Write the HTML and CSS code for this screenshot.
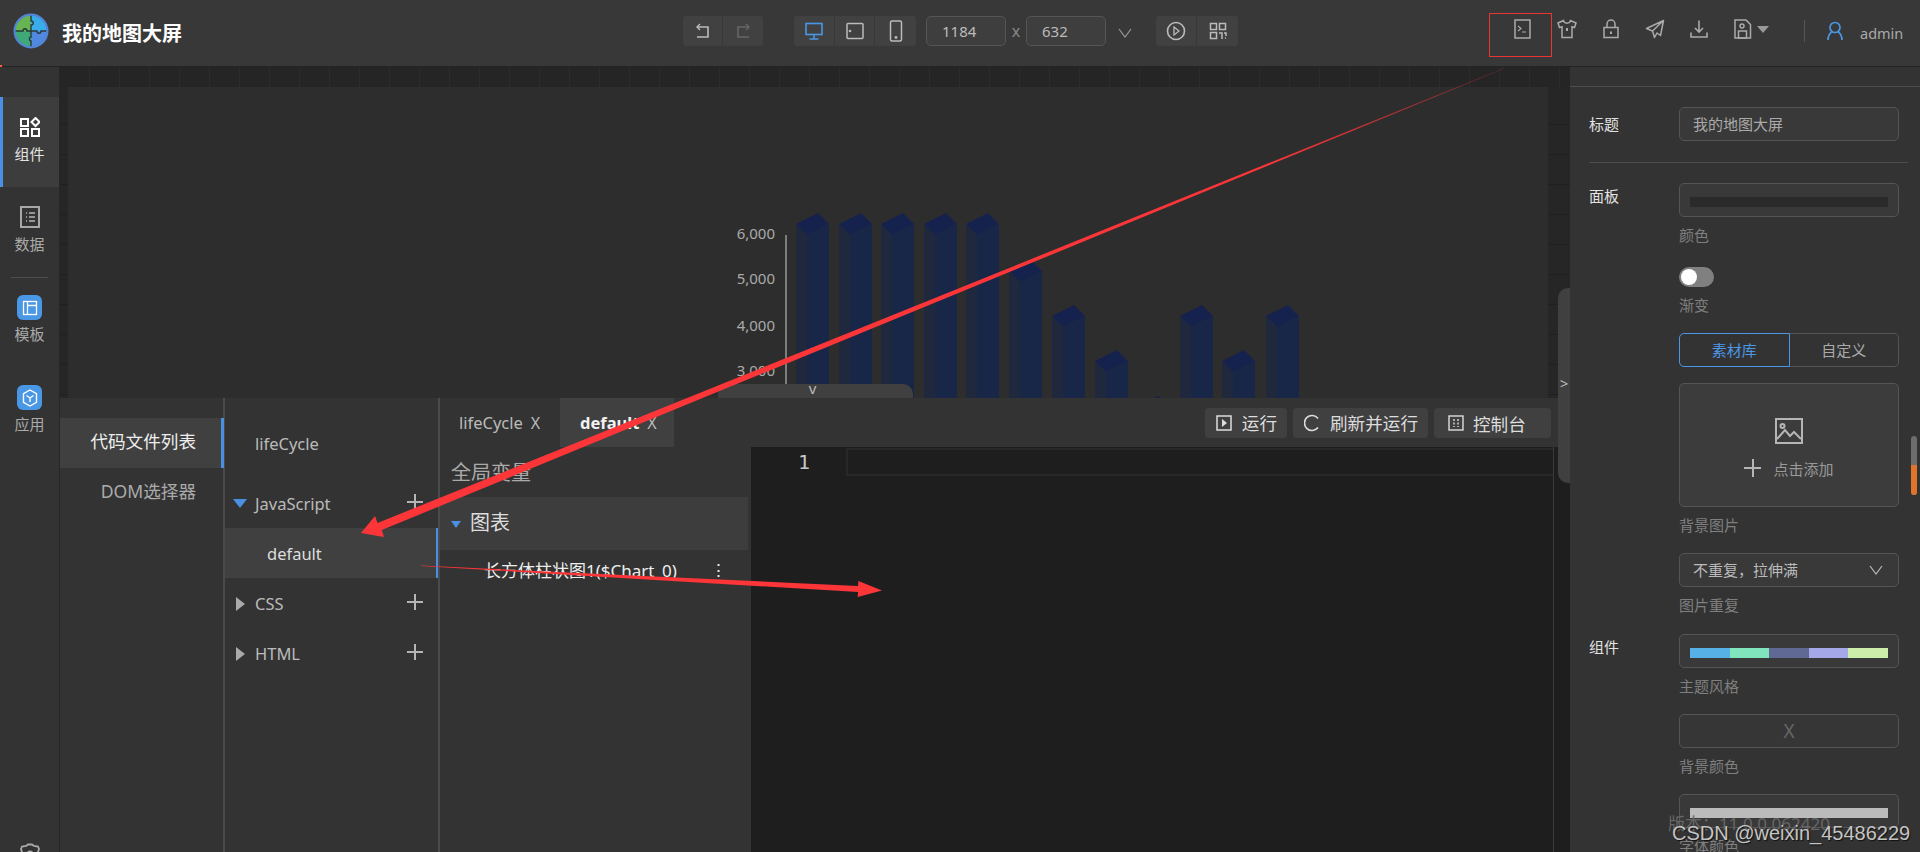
FILE: index.html
```html
<!DOCTYPE html>
<html lang="zh-CN">
<head>
<meta charset="utf-8">
<title>我的地图大屏</title>
<link rel="stylesheet" href="styles.css">
</head>
<body>
<div class="app">
  <header class="topbar">
    <div class="brand">
      <svg class="logo" width="36" height="36" viewBox="0 0 36 36">
        <path d="M18 2A16 16 0 0 0 2 18H18Z" fill="#66b552"/>
        <path d="M18 2A16 16 0 0 1 34 18H18Z" fill="#38ade9"/>
        <path d="M2 18A16 16 0 0 0 18 34V18Z" fill="#3fa878"/>
        <path d="M34 18A16 16 0 0 1 18 34V18Z" fill="#5089e0"/>
        <path d="M2 18H10c0-3 4-3 4 0h4V12c3 0 3-4 0-4V2M18 18v6c-2 0-2 4 0 4v6M18 18h6c0 3 4 3 4 0h6" fill="none" stroke="#2b3a3a" stroke-width="1.4"/>
        <circle cx="18" cy="18" r="16.4" fill="none" stroke="#5285d6" stroke-width="2.2"/>
      </svg>
      <span class="brand-name">我的地图大屏</span>
    </div>
    <div class="btn-group undo">
      <span class="cell"><svg width="18" height="18" viewBox="0 0 18 18" fill="none" stroke="#bbb" stroke-width="1.6"><path d="M3 5h11v10H3"/><path d="M6 2L3 5l3 3" stroke-width="1.4"/></svg></span>
      <span class="cell"><svg width="18" height="18" viewBox="0 0 18 18" fill="none" stroke="#666" stroke-width="1.6"><path d="M15 5H4v10h11"/><path d="M12 2l3 3-3 3" stroke-width="1.4"/></svg></span>
    </div>
    <div class="btn-group device">
      <span class="cell"><svg width="20" height="20" viewBox="0 0 20 20" fill="none" stroke="#4a97e6" stroke-width="1.6"><rect x="2" y="2.500" width="16" height="11"/><path d="M10 14v4M5.500 18h9"/></svg></span>
      <span class="cell"><svg width="20" height="20" viewBox="0 0 20 20" fill="none" stroke="#bbb" stroke-width="1.5"><rect x="2" y="2.500" width="16" height="15" rx="1"/><circle cx="5" cy="10" r=".6" fill="#bbb"/></svg></span>
      <span class="cell"><svg width="20" height="22" viewBox="0 0 20 22" fill="none" stroke="#bbb" stroke-width="1.5"><rect x="4.500" y="1" width="11" height="20" rx="1.500"/><circle cx="10" cy="17.500" r=".7" fill="#bbb"/></svg></span>
    </div>
    <span class="size-input first">1184</span>
    <span class="size-x">x</span>
    <span class="size-input">632</span>
    <svg class="size-chevron" width="14" height="10" viewBox="0 0 14 10" fill="none" stroke="#999" stroke-width="1.200"><path d="M1 1l6 8 6-8"/></svg>
    <div class="btn-group preview">
      <span class="cell"><svg width="20" height="20" viewBox="0 0 20 20" fill="none" stroke="#bbb" stroke-width="1.600"><circle cx="10" cy="10" r="8.500"/><path d="M8 6l5 4-5 4z" stroke-width="1.300"/></svg></span>
      <span class="cell"><svg width="18" height="18" viewBox="0 0 18 18" fill="none" stroke="#bbb" stroke-width="1.500"><rect x="1.500" y="1.500" width="6" height="6"/><rect x="10.500" y="1.500" width="6" height="6"/><rect x="1.500" y="10.500" width="6" height="6"/><path d="M10 11h3v6M15 11h2v3M16 16h1" /></svg></span>
    </div>
    <div class="tools">
      <span class="tool"><svg width="18" height="20" viewBox="0 0 18 20" fill="none" stroke="#aaa" stroke-width="1.500"><rect x="1" y="1" width="15" height="18"/><path d="M4 7l3 2.500-3 2.500M8 13h4" stroke-width="1.200"/></svg></span>
      <span class="tool"><svg width="20" height="20" viewBox="0 0 20 20" fill="none" stroke="#aaa" stroke-width="1.500"><path d="M6.500 1.500L1 4l1.500 4.500 2.500-.7V18.500h10V7.800l2.500.7L19 4l-5.500-2.500c-.5 3.500-6.500 3.500-7 0z"/><path d="M10 9v3" stroke-width="2"/></svg></span>
      <span class="tool"><svg width="18" height="20" viewBox="0 0 18 20" fill="none" stroke="#aaa" stroke-width="1.500"><rect x="2" y="8.500" width="14" height="10"/><path d="M5 8.500V5a4 4 0 0 1 8 0v3.500"/><path d="M9 12.500v2.500" stroke-width="2"/></svg></span>
      <span class="tool"><svg width="20" height="20" viewBox="0 0 20 20" fill="none" stroke="#aaa" stroke-width="1.500" stroke-linejoin="round"><path d="M18.500 1.500L1.500 9.500l6 2.500 2 6.500 2.500-4.500 3.500 2.500zM18.500 1.500L7.500 12"/></svg></span>
      <span class="tool"><svg width="20" height="20" viewBox="0 0 20 20" fill="none" stroke="#aaa" stroke-width="1.600"><path d="M10 1.500v11M6 9l4 4 4-4"/><path d="M2 13.500v4.500h16v-4.500"/></svg></span>
      <span class="tool save"><svg width="18" height="20" viewBox="0 0 18 20" fill="none" stroke="#aaa" stroke-width="1.500"><path d="M1 1h11l4.500 4.500V19H1z"/><circle cx="8" cy="7" r="2"/><rect x="4.500" y="12" width="8" height="7"/></svg><i class="caret"></i></span>
    </div>
    <span class="vsep"></span>
    <svg class="user-ic" width="18" height="20" viewBox="0 0 18 20" fill="none" stroke="#4a97e6" stroke-width="1.700"><circle cx="9" cy="6.500" r="5"/><path d="M2 19c0-5 3-7.500 3.500-8M16 19c0-5-3-7.500-3.500-8"/></svg>
    <span class="user-name">admin</span>
  </header>

  <div class="body">
    <nav class="side">
      <div class="side-item active">
        <svg width="20" height="20" viewBox="0 0 20 20" fill="none" stroke="#fff" stroke-width="2"><rect x="1" y="2" width="7" height="7"/><rect x="1" y="12" width="7" height="7"/><rect x="12" y="12" width="7" height="7"/><path d="M15.500 1l4 4-4 4-4-4z"/></svg>
        <span>组件</span>
      </div>
      <div class="side-item">
        <svg width="20" height="24" viewBox="0 0 20 24" fill="none" stroke="#b5b5b5" stroke-width="1.800"><rect x="1" y="2" width="18" height="20"/><path d="M6 8h1M9 8h6M6 12h1M9 12h6M6 16h1M9 16h6" stroke-width="1.500"/></svg>
        <span>数据</span>
      </div>
      <div class="side-sep"></div>
      <div class="side-item app-item">
        <b class="badge"><svg width="16" height="16" viewBox="0 0 16 16" fill="none" stroke="#fff" stroke-width="1.300"><rect x="1.500" y="1.500" width="13" height="13"/><path d="M5.500 1.500v13M5.500 5.500h9"/></svg></b>
        <span>模板</span>
      </div>
      <div class="side-item app-item">
        <b class="badge"><svg width="16" height="18" viewBox="0 0 16 18" fill="none" stroke="#fff" stroke-width="1.400"><path d="M8 1l6.500 3.700v8.600L8 17l-6.500-3.700V4.700z"/><path d="M4.500 6.500L8 9l3.500-2.500M8 9v4"/></svg></b>
        <span>应用</span>
      </div>
      <svg class="gear" width="24" height="24" viewBox="0 0 24 24" fill="none" stroke="#aaa" stroke-width="1.800"><path d="M8 3l2-1.500h4L16 3l4 .5 1 2.500-1 3 2 3-2 3 1 3-1 2.500-4 .5-2 1.500h-4L8 21l-4-.5L3 18l1-3-2-3 2-3-1-3 1-2.500z"/><circle cx="12" cy="12" r="3.500"/></svg>
    </nav>

    <main class="work">
      <div class="ruler-top"></div>
      <div class="stage">
        <div class="ruler-left"></div>
        <div class="canvas">
          <svg class="chart" width="1480" height="311" viewBox="68 87 1480 311">
            <defs>
              <g id="bar">
                <path d="M0 0L11 11V400H0Z" fill="#20283e"/>
                <path d="M11 11L33 0V400H11Z" fill="#182748"/>
                <path d="M0 0L22-11L33 0L11 11Z" fill="#15224d"/>
              </g>
            </defs>
            <use href="#bar" x="796" y="224"/>
            <use href="#bar" x="839" y="224"/>
            <use href="#bar" x="881" y="224"/>
            <use href="#bar" x="924" y="224"/>
            <use href="#bar" x="966" y="224"/>
            <use href="#bar" x="1009" y="271"/>
            <use href="#bar" x="1052" y="316"/>
            <use href="#bar" x="1095" y="361"/>
            <use href="#bar" x="1136" y="407"/>
            <use href="#bar" x="1180" y="316"/>
            <use href="#bar" x="1222" y="361"/>
            <use href="#bar" x="1266" y="316"/>
            <line x1="786" y1="235" x2="786" y2="398" stroke="#999" stroke-width="1.500"/>
            <g class="axis-labels">
              <text x="775" y="239">6,000</text>
              <text x="775" y="284">5,000</text>
              <text x="775" y="331">4,000</text>
              <text x="775" y="376">3,000</text>
            </g>
          </svg>
          <div class="collapse-tab">v</div>
        </div>
        <div class="ruler-right"></div>
      </div>

      <section class="code-panel">
        <div class="col-files">
          <div class="file-tab active">代码文件列表</div>
          <div class="file-tab">DOM选择器</div>
        </div>
        <div class="col-tree">
          <div class="tree-row life">lifeCycle</div>
          <div class="tree-row"><i class="tri open"></i>JavaScript<span class="plus"></span></div>
          <div class="tree-row child">default</div>
          <div class="tree-row"><i class="tri"></i>CSS<span class="plus"></span></div>
          <div class="tree-row"><i class="tri"></i>HTML<span class="plus"></span></div>
        </div>
        <div class="col-main">
          <div class="tabbar">
            <div class="tab">lifeCycle<span class="tab-x">X</span></div>
            <div class="tab active">default<span class="tab-x">X</span></div>
            <div class="actions">
              <span class="act"><svg width="16" height="16" viewBox="0 0 16 16" fill="none" stroke="#ddd" stroke-width="1.500"><rect x="1" y="1" width="14" height="14"/><path d="M6 4l5 4-5 4z" fill="#ddd" stroke="none"/></svg>运行</span>
              <span class="act"><svg width="16" height="18" viewBox="0 0 16 18" fill="none" stroke="#ddd" stroke-width="1.600"><path d="M14 4.500A7.500 7.500 0 1 0 14 13.500"/></svg>刷新并运行</span>
              <span class="act last"><svg width="16" height="16" viewBox="0 0 16 16" fill="none" stroke="#ddd" stroke-width="1.400"><rect x="1" y="1" width="14" height="14"/><path d="M6 4v2M6 7.500v2M6 11v1M10 4v2M10 7.500v2M10 11v1"/></svg>控制台</span>
            </div>
          </div>
          <div class="split">
            <div class="vars">
              <div class="var-global">全局变量</div>
              <div class="var-group"><i class="tri open small"></i>图表</div>
              <div class="var-item">长方体柱状图1($Chart_0)<span class="dots">⋮</span></div>
            </div>
            <div class="editor">
              <div class="gutter">1</div>
              <div class="code">
                <div class="cur-line"></div>
              </div>
              <div class="mini"></div>
            </div>
          </div>
        </div>
      </section>
      <div class="side-handle">&gt;</div>
    </main>

    <aside class="props">
      <div class="props-top"></div>
      <div class="prop-row first">
        <div class="prop-label">标题</div>
        <div class="prop-fields"><div class="ctl text">我的地图大屏</div></div>
      </div>
      <div class="prop-div"></div>
      <div class="prop-row">
        <div class="prop-label">面板</div>
        <div class="prop-fields">
          <div class="ctl swatch"><span class="bar dark"></span></div>
          <div class="hint">颜色</div>
          <div class="toggle"><span></span></div>
          <div class="hint">渐变</div>
          <div class="seg"><span class="on">素材库</span><span>自定义</span></div>
          <div class="upload">
            <svg width="28" height="26" viewBox="0 0 28 26" fill="none" stroke="#b5b5b5" stroke-width="2"><rect x="1" y="1" width="26" height="24"/><circle cx="7.500" cy="8" r="2"/><path d="M2 21l8-9 5 6 4-4 7 7"/></svg>
            <div class="upload-add"><span class="plus up-plus"></span>点击添加</div>
          </div>
          <div class="hint">背景图片</div>
          <div class="ctl text select">不重复，拉伸满<svg width="14" height="10" viewBox="0 0 14 10" fill="none" stroke="#bbb" stroke-width="1.200"><path d="M1 1l6 8 6-8"/></svg></div>
          <div class="hint">图片重复</div>
        </div>
      </div>
      <div class="prop-row group">
        <div class="prop-label">组件</div>
        <div class="prop-fields">
          <div class="ctl swatch">
            <span class="theme a"></span><span class="theme b"></span><span class="theme c"></span><span class="theme d"></span><span class="theme e"></span>
          </div>
          <div class="hint">主题风格</div>
          <div class="ctl clear">X</div>
          <div class="hint">背景颜色</div>
          <div class="ctl swatch"><span class="bar light"></span></div>
          <div class="hint">字体颜色</div>
        </div>
      </div>
      <div class="scroll-thumb"><span></span></div>
      <div class="version">版本：11.0.0.062420</div>
      <div class="mark">CSDN @weixin_45486229</div>
    </aside>
  </div>
</div>

<svg class="marks" width="1920" height="852" viewBox="0 0 1920 852">
  <defs>
    <linearGradient id="fade" gradientUnits="userSpaceOnUse" x1="1505" y1="68" x2="1280" y2="159">
      <stop offset="0" stop-color="#fb3538" stop-opacity=".25"/>
      <stop offset="1" stop-color="#fb3538"/>
    </linearGradient>
  </defs>
  <rect x="0" y="65" width="2" height="2" fill="#ff5a3c"/>
  <rect x="1489.500" y="13.500" width="62" height="43" fill="none" stroke="#e93535" stroke-width="1"/>
  <polygon points="1505.100,68.200 381.800,530 384,537 361,533 375,516 377.500,523 1504.900,67.800" fill="url(#fade)"/>
  <polygon points="421,566 858.100,592 857.600,597 882,590.500 858.400,581 858,586 421,565.600" fill="#fb3538"/>
</svg>
</body>
</html>
```

FILE: styles.css
```css
* { box-sizing: border-box; }
html, body { margin: 0; height: 100%; overflow: hidden; background: #333; }
body { font-family: "Noto Sans", "Noto Sans CJK SC", sans-serif; color: #bbb; position: relative; }
i { font-style: normal; }
svg { display: block; flex: none; }

.app { width: 1920px; height: 852px; display: flex; flex-direction: column; overflow: hidden; }

/* top bar */
.topbar { height: 67px; flex: none; display: flex; align-items: center; background: #383838; border-bottom: 1px solid #232323; padding-bottom: 4px; }
.brand { width: 683px; flex: none; display: flex; align-items: center; padding-left: 13px; }
.logo { margin-right: 13px; }
.brand-name { color: #fff; font-weight: 700; font-size: 20px; margin-top: 3px; }
.btn-group { display: flex; height: 30px; background: #414141; border-radius: 3px; flex: none; }
.btn-group .cell { width: 40px; display: flex; align-items: center; justify-content: center; border-right: 1px solid #383838; }
.btn-group .cell:last-child { border-right: 0; }
.device { margin-left: 31px; width: 122px; }
.device .cell { width: 41px; }
.preview { width: 82px; }
.preview .cell { width: 41px; }
.size-input { width: 80px; height: 30px; border: 1px solid #555; border-radius: 5px; background: #3e3e3e; color: #bbb; font-size: 15px; line-height: 28px; padding-left: 15px; flex: none; }
.size-input.first { margin-left: 10px; }
.size-x { width: 20px; text-align: center; color: #888; font-size: 16px; flex: none; }
.size-chevron { margin-left: 12px; margin-right: 24px; margin-top: 4px; }
.tools { display: flex; margin-left: 263px; margin-top: -4px; flex: none; }
.tool { width: 44px; display: flex; justify-content: center; align-items: center; }
.tool.save { width: 54px; padding: 0 4px 0 10px; gap: 5px; }
.caret { width: 0; height: 0; border-left: 6px solid transparent; border-right: 6px solid transparent; border-top: 7px solid #999; margin-top: 1px; }
.vsep { width: 1px; height: 22px; background: #555; margin-left: 29px; flex: none; }
.user-ic { margin-left: 21px; margin-top: 0; }
.user-name { margin-left: 16px; font-size: 14.500px; color: #aaa; margin-top: 4px; }

/* layout */
.body { flex: 1; min-height: 0; display: flex; }

/* sidebar */
.side { width: 60px; flex: none; background: #333; border-right: 1px solid #262626; padding-top: 30px; display: flex; flex-direction: column; position: relative; }
.side-item { height: 90px; flex: none; display: flex; flex-direction: column; align-items: center; padding-top: 20px; font-size: 15px; line-height: 20px; color: #aaa; gap: 7px; }
.side-item svg { height: 20px; }
.side-item.active { background: #3d3d3d; border-left: 3px solid #4a90e2; color: #e4e4e4; padding-right: 3px; }
.side-item:nth-child(2) { padding-top: 18px; gap: 5px; height: 90px; }
.side-item:nth-child(2) svg { height: 24px; }
.side-sep { height: 1px; background: #4d4d4d; margin: 0 11px; flex: none; }
.side-item.app-item { height: 90px; padding-top: 17px; gap: 4px; }
.badge { width: 25px; height: 25px; border-radius: 6px; background: #4a97e6; display: flex; align-items: center; justify-content: center; }
.badge svg { height: auto; }
.gear { position: absolute; left: 18px; top: 776px; }

/* work area */
.work { flex: 1; min-width: 0; display: flex; flex-direction: column; position: relative; background: #262626; }
.ruler-top { height: 20px; flex: none; background: #252525 repeating-linear-gradient(90deg, transparent 0 29px, #2c2c2c 29px 30px); }
.stage { height: 311px; flex: none; display: flex; }
.ruler-left, .ruler-right { flex: none; background: #262626 repeating-linear-gradient(180deg, transparent 0 29px, #202020 29px 30px); background-position: 0 8px; }
.ruler-left { width: 8px; }
.ruler-right { width: 22px; }
.canvas { width: 1480px; flex: none; background: #2d2d2d; position: relative; overflow: hidden; }
.chart { position: absolute; left: 0; top: 0; }
.axis-labels text { font-family: "Noto Sans", sans-serif; font-size: 15px; fill: #aaa; text-anchor: end; }
.collapse-tab { position: absolute; left: 650px; bottom: 0; width: 195px; height: 14px; background: #404040; border-radius: 10px 10px 0 0; color: #bbb; font-size: 15px; line-height: 9px; text-align: center; text-indent: -6px; }

.code-panel { flex: 1; min-height: 0; background: #333; display: flex; }
.col-files { width: 165px; flex: none; padding-top: 20px; border-right: 2px solid #4a4a4a; }
.file-tab { height: 50px; padding-right: 27px; text-align: right; line-height: 46px; font-size: 17.600px; color: #aaa; }
.file-tab.active { background: #404040; color: #eee; border-right: 3px solid #4a90e2; padding-right: 25px; margin-right: -1px; }
.col-tree { width: 215px; flex: none; border-right: 2px solid #4a4a4a; padding-top: 20px; }
.tree-row { height: 50px; display: flex; align-items: center; padding-left: 30px; font-size: 16.500px; color: #bbb; position: relative; }
.tree-row.life { margin-bottom: 10px; }
.tree-row.child { background: #404040; color: #ddd; padding-left: 42px; border-right: 2px solid #4a90e2; }
.tri { position: absolute; left: 11px; top: 19px; width: 0; height: 0; border-top: 7px solid transparent; border-bottom: 7px solid transparent; border-left: 9px solid #aaa; }
.tri.open { left: 8px; top: 21px; border-left: 7px solid transparent; border-right: 7px solid transparent; border-top: 9px solid #4a90e2; border-bottom: 0; }
.plus { position: absolute; left: 182px; top: 16px; width: 16px; height: 16px; background: linear-gradient(#b5b5b5, #b5b5b5) center / 100% 2px no-repeat, linear-gradient(#b5b5b5, #b5b5b5) center / 2px 100% no-repeat; }
.col-main { flex: 1; min-width: 0; display: flex; flex-direction: column; }
.tabbar { height: 49px; flex: none; display: flex; align-items: stretch; padding-right: 19px; }
.tab { display: flex; align-items: center; padding: 0 12px 0 19px; font-size: 16.500px; color: #bbb; width: 120px; }
.tab.active { background: #404040; color: #f2f2f2; font-weight: 700; width: 114px; padding-left: 20px; }
.tab-x { margin-left: 8px; font-weight: 400; font-size: 16px; color: #bbb; }
.actions { margin-left: auto; display: flex; align-items: center; gap: 6px; }
.act { height: 30px; padding: 0 10px 0 11px; background: #404040; border-radius: 4px; display: flex; align-items: center; gap: 10px; font-size: 17.600px; color: #ddd; }
.act.last { width: 117px; gap: 9px; padding-left: 14px; margin-top: 1px; }
.split { flex: 1; min-height: 0; display: flex; }
.vars { width: 311px; flex: none; }
.var-global { height: 50px; line-height: 52px; padding-left: 11px; font-size: 20px; color: #aaa; }
.var-group { height: 53px; width: 308px; background: #3d3d3d; line-height: 52px; padding-left: 30px; font-size: 20px; color: #ddd; position: relative; }
.tri.small { left: 11px; top: 24px; border-left-width: 5px; border-right-width: 5px; border-top-width: 7px; }
.var-item { height: 46px; line-height: 42px; padding-left: 44px; font-size: 17px; color: #eee; position: relative; white-space: nowrap; }
.dots { position: absolute; left: 270px; top: -1px; font-size: 17px; }
.editor { flex: 1; min-width: 0; background: #1e1e1e; display: flex; }
.gutter { width: 95px; flex: none; padding: 1px 0 0 47px; font-size: 20px; line-height: 28px; color: #c8c8c8; font-family: "DejaVu Sans Mono", monospace; }
.code { flex: 1; min-width: 0; padding-top: 1px; }
.cur-line { height: 28px; border: 2px solid #282828; border-right: 0; }
.mini { width: 17px; flex: none; border-left: 1px solid #3a3a3a; }
.side-handle { position: absolute; left: 1498px; top: 221px; width: 12px; height: 195px; background: #404040; border-radius: 10px 0 0 10px; color: #bbb; font-size: 15px; line-height: 190px; text-align: center; }

/* properties */
.props { width: 350px; flex: none; background: #333; position: relative; overflow: hidden; padding: 0 21px 0 19px; }
.props-top { height: 20px; margin: 0 -21px 0 -19px; border-bottom: 1px solid #4e4e4e; }
.prop-row { display: flex; }
.prop-row.first { margin-top: 20px; }
.prop-row.first .prop-label { line-height: 34px; }
.prop-row.group { margin-top: 1px; }
.prop-label { width: 90px; flex: none; font-size: 15px; line-height: 26px; color: #e2e2e2; }
.prop-fields { width: 220px; flex: none; }
.prop-div { height: 1px; background: #4e4e4e; margin: 21px -9px 20px 0; }
.ctl { height: 34px; border: 1px solid #555; border-radius: 5px; background: #393939; }
.ctl.text { line-height: 32px; padding-left: 13px; font-size: 15px; color: #aaa; }
.ctl.swatch { display: flex; padding: 13px 10px 9px; }
.ctl.select { display: flex; align-items: center; justify-content: space-between; padding-right: 15px; color: #bbb; }
.ctl.clear { text-align: center; line-height: 32px; font-size: 19px; color: #666; background: #363636; }
.bar { flex: 1; }
.bar.dark { background: #2a2a2a; }
.bar.light { background: #bbb; }
.theme { flex: 1; }
.theme.a { background: #55b1e6; }
.theme.b { background: #80e5bd; }
.theme.c { background: #5f6994; }
.theme.d { background: #a4a8e8; }
.theme.e { background: #cdedab; }
.hint { height: 20px; margin-top: 8px; margin-bottom: 18px; font-size: 15px; line-height: 20px; color: #7f7f7f; }
.toggle { width: 35px; height: 20px; margin-top: 22px; border-radius: 10px; background: #808080; padding: 2px; }
.toggle span { display: block; width: 16px; height: 16px; border-radius: 50%; background: #fff; }
.seg { display: flex; height: 34px; font-size: 15px; line-height: 32px; text-align: center; }
.seg span { flex: 1; border: 1px solid #555; border-left: 0; border-radius: 0 5px 5px 0; color: #aaa; }
.seg .on { border: 1px solid #4a97e6; border-radius: 5px 0 0 5px; color: #4a97e6; }
.upload { height: 124px; margin-top: 16px; border: 1px solid #555; border-radius: 5px; background: #3c3c3c; display: flex; flex-direction: column; align-items: center; padding-top: 34px; }
.upload-add { display: flex; align-items: center; margin-top: 12px; font-size: 15px; color: #999; height: 24px; padding-left: 29px; position: relative; }
.plus.up-plus { left: 0; top: 3px; width: 17px; height: 18px; }
.scroll-thumb { position: absolute; left: 341px; top: 369px; width: 6px; height: 59px; border-radius: 3px; background: #6d6d6d; overflow: hidden; }
.scroll-thumb span { display: block; margin-top: 29px; height: 30px; background: #e2742a; }
.version { position: absolute; left: 98px; top: 745px; font-size: 17px; line-height: 24px; color: #666; white-space: nowrap; }
.mark { position: absolute; left: 102px; top: 754px; font-family: "Liberation Sans", Arial, sans-serif; font-size: 20px; line-height: 24px; color: #c4c4c4; text-shadow: 1px 1px 1px #111; white-space: nowrap; }

/* annotation overlay */
.marks { position: absolute; left: 0; top: 0; pointer-events: none; }
```
